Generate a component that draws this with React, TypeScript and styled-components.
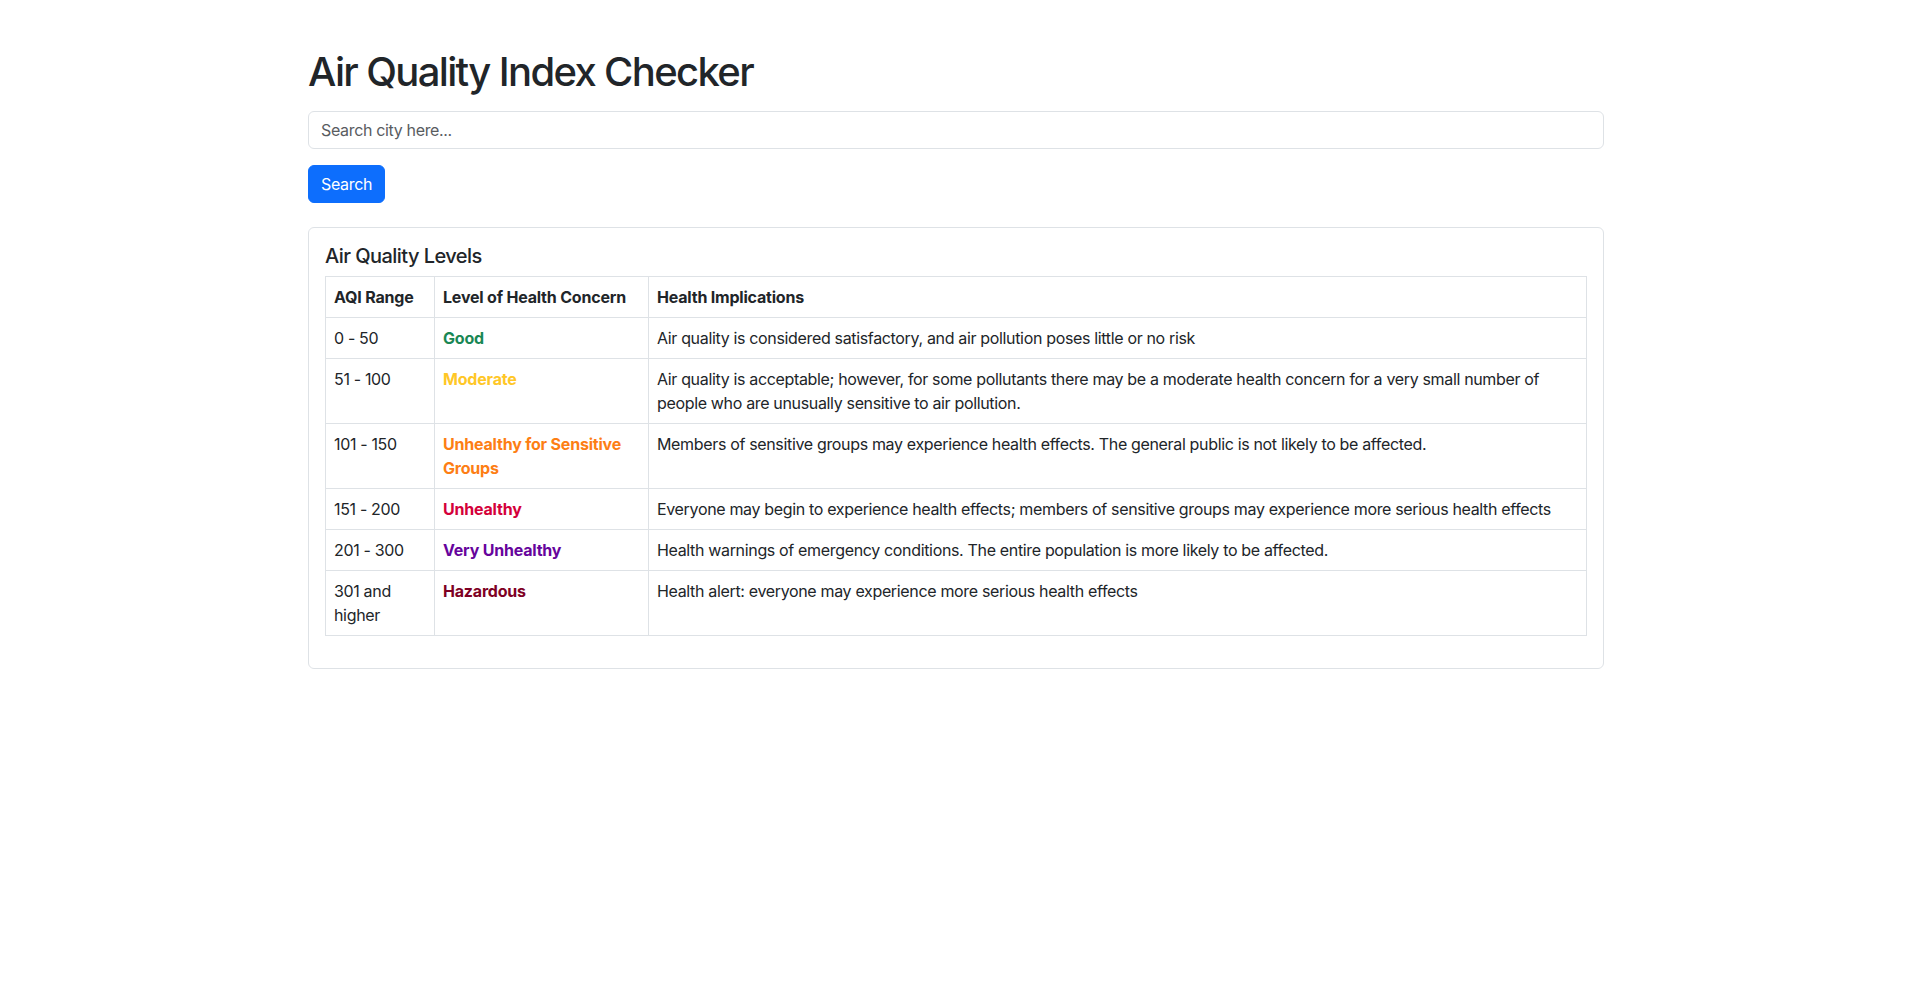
import React from "react";
import styled, { createGlobalStyle } from "styled-components";

const GlobalStyle = createGlobalStyle`
  *, *::before, *::after { box-sizing: border-box; }
  body {
    margin: 0;
    font-family: Inter, "Noto Sans", "Liberation Sans", sans-serif;
    font-size: 16px;
    line-height: 1.5;
    color: #212529;
    background: #fff;
    letter-spacing: -0.34px;
  }
`;

const Container = styled.div`
  max-width: 1320px;
  margin: 48px auto 0;
  padding: 0 12px;
`;

const Title = styled.h1`
  margin: 0 0 15px;
  font-size: 40px;
  font-weight: 500;
  line-height: 1.2;
  letter-spacing: -1.65px;
`;

const SearchInput = styled.input`
  display: block;
  width: 100%;
  height: 38px;
  padding: 6px 12px;
  font: inherit;
  letter-spacing: inherit;
  color: #212529;
  border: 1px solid #dee2e6;
  border-radius: 6px;
  margin-bottom: 16px;
  outline: none;
  &::placeholder { color: #595c5f; }
`;

const Button = styled.button`
  display: inline-block;
  height: 38px;
  padding: 6px 12px;
  font: inherit;
  letter-spacing: inherit;
  color: #fff;
  background: #0d6efd;
  border: 1px solid #0d6efd;
  border-radius: 6px;
  cursor: pointer;
`;

const Card = styled.div`
  margin-top: 24px;
  border: 1px solid #dee2e6;
  border-radius: 6px;
  padding: 16px 16px 32px;
`;

const CardTitle = styled.h5`
  margin: 0 0 8px;
  font-size: 20px;
  font-weight: 500;
  line-height: 1.2;
  letter-spacing: -0.55px;
`;

const Table = styled.table`
  width: 100%;
  border-collapse: collapse;
  table-layout: fixed;
`;

const Th = styled.th<{ $w?: number }>`
  text-align: left;
  font-weight: 700;
  padding: 8px;
  border: 1px solid #dee2e6;
  vertical-align: top;
  letter-spacing: -0.2px;
  ${(p) => (p.$w ? `width: ${p.$w}px;` : "")}
`;

const Td = styled.td`
  padding: 8px;
  border: 1px solid #dee2e6;
  vertical-align: top;
`;

const Level = styled.span<{ $color: string }>`
  font-weight: 700;
  letter-spacing: -0.2px;
  color: ${(p) => p.$color};
`;

const rows = [
  { range: "0 - 50", level: "Good", color: "#198754", text: "Air quality is considered satisfactory, and air pollution poses little or no risk" },
  { range: "51 - 100", level: "Moderate", color: "#ffc727", text: "Air quality is acceptable; however, for some pollutants there may be a moderate health concern for a very small number of people who are unusually sensitive to air pollution." },
  { range: "101 - 150", level: "Unhealthy for Sensitive Groups", color: "#fd7e14", text: "Members of sensitive groups may experience health effects. The general public is not likely to be affected." },
  { range: "151 - 200", level: "Unhealthy", color: "#d4003a", text: "Everyone may begin to experience health effects; members of sensitive groups may experience more serious health effects" },
  { range: "201 - 300", level: "Very Unhealthy", color: "#66049c", text: "Health warnings of emergency conditions. The entire population is more likely to be affected." },
  { range: "301 and higher", level: "Hazardous", color: "#7e0023", text: "Health alert: everyone may experience more serious health effects" },
];

export default function App() {
  return (
    <>
      <GlobalStyle />
      <Container>
        <Title>Air Quality Index Checker</Title>
        <SearchInput placeholder="Search city here..." />
        <Button>Search</Button>
        <Card>
          <CardTitle>Air Quality Levels</CardTitle>
          <Table>
            <thead>
              <tr>
                <Th $w={109}>AQI Range</Th>
                <Th $w={214}>Level of Health Concern</Th>
                <Th>Health Implications</Th>
              </tr>
            </thead>
            <tbody>
              {rows.map((r) => (
                <tr key={r.range}>
                  <Td>{r.range}</Td>
                  <Td>
                    <Level $color={r.color}>{r.level}</Level>
                  </Td>
                  <Td>{r.text}</Td>
                </tr>
              ))}
            </tbody>
          </Table>
        </Card>
      </Container>
    </>
  );
}
